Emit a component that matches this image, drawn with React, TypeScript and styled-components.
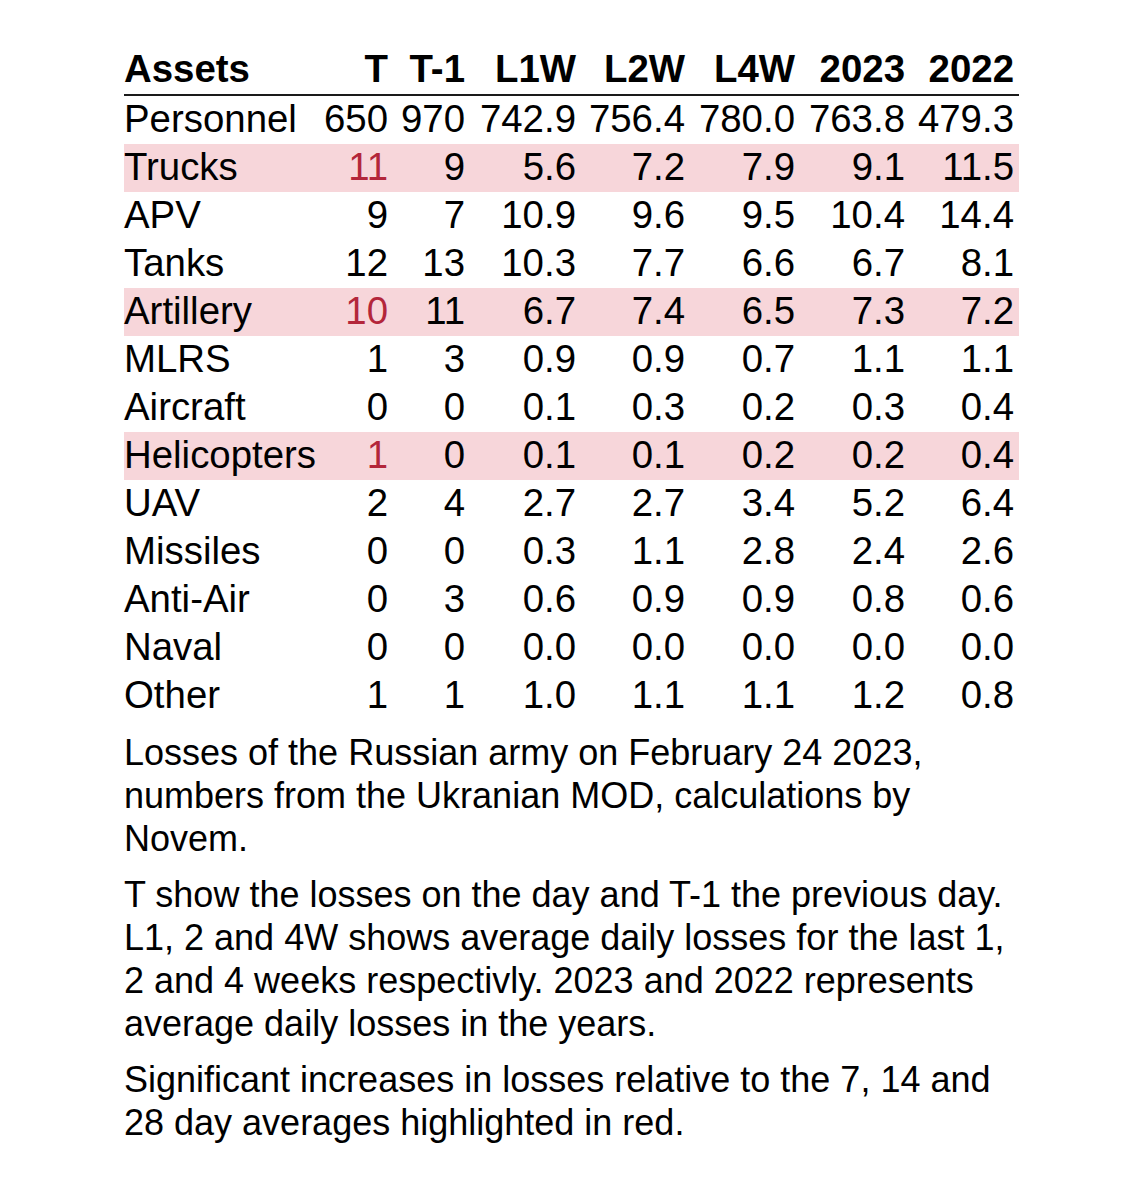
import React from "react";
import styled, { createGlobalStyle } from "styled-components";

const GlobalStyle = createGlobalStyle`
  html, body {
    margin: 0;
    padding: 0;
    background: #ffffff;
  }
  body {
    font-family: "Liberation Sans", Arial, sans-serif;
    color: #000;
  }
`;

const Page = styled.div`
  padding: 46px 0 0 124px;
  width: 895px;
`;

const Table = styled.div`
  display: grid;
  grid-template-columns: 194px 75px 77px 111px 109px 110px 110px 109px;
  font-size: 38.4px;
  line-height: 45px;
`;

const Row = styled.div<{ $head?: boolean; $hl?: boolean }>`
  display: contents;
  & > * {
    padding-bottom: 3px;
    background: ${(p) => (p.$hl ? "#f7d6da" : "transparent")};
    font-weight: ${(p) => (p.$head ? 700 : 400)};
    border-bottom: ${(p) => (p.$head ? "2px solid #1a1a1a" : "none")};
  }
`;

const NameCell = styled.div`
  text-align: left;
  white-space: nowrap;
`;

const NumCell = styled.div<{ $red?: boolean }>`
  text-align: right;
  padding-right: 5px;
  white-space: nowrap;
  color: ${(p) => (p.$red ? "#b3263a" : "#000")};
`;

const Caption = styled.div`
  margin-top: 11px;
  font-size: 36px;
  line-height: 43px;
`;

const Para = styled.p`
  margin: 0 0 13px 0;
`;

type Item = { name: string; vals: string[]; hl?: boolean };

const headers = ["T", "T-1", "L1W", "L2W", "L4W", "2023", "2022"];

const rows: Item[] = [
  { name: "Personnel", vals: ["650", "970", "742.9", "756.4", "780.0", "763.8", "479.3"] },
  { name: "Trucks", vals: ["11", "9", "5.6", "7.2", "7.9", "9.1", "11.5"], hl: true },
  { name: "APV", vals: ["9", "7", "10.9", "9.6", "9.5", "10.4", "14.4"] },
  { name: "Tanks", vals: ["12", "13", "10.3", "7.7", "6.6", "6.7", "8.1"] },
  { name: "Artillery", vals: ["10", "11", "6.7", "7.4", "6.5", "7.3", "7.2"], hl: true },
  { name: "MLRS", vals: ["1", "3", "0.9", "0.9", "0.7", "1.1", "1.1"] },
  { name: "Aircraft", vals: ["0", "0", "0.1", "0.3", "0.2", "0.3", "0.4"] },
  { name: "Helicopters", vals: ["1", "0", "0.1", "0.1", "0.2", "0.2", "0.4"], hl: true },
  { name: "UAV", vals: ["2", "4", "2.7", "2.7", "3.4", "5.2", "6.4"] },
  { name: "Missiles", vals: ["0", "0", "0.3", "1.1", "2.8", "2.4", "2.6"] },
  { name: "Anti-Air", vals: ["0", "3", "0.6", "0.9", "0.9", "0.8", "0.6"] },
  { name: "Naval", vals: ["0", "0", "0.0", "0.0", "0.0", "0.0", "0.0"] },
  { name: "Other", vals: ["1", "1", "1.0", "1.1", "1.1", "1.2", "0.8"] },
];

export default function App() {
  return (
    <>
      <GlobalStyle />
      <Page>
        <Table>
          <Row $head>
            <NameCell>Assets</NameCell>
            {headers.map((h) => (
              <NumCell key={h}>{h}</NumCell>
            ))}
          </Row>
          {rows.map((r) => (
            <Row key={r.name} $hl={r.hl}>
              <NameCell>{r.name}</NameCell>
              {r.vals.map((v, i) => (
                <NumCell key={i} $red={r.hl && i === 0}>
                  {v}
                </NumCell>
              ))}
            </Row>
          ))}
        </Table>
        <Caption>
          <Para>
            Losses of the Russian army on February 24 2023, numbers from the Ukranian MOD,
            calculations by Novem.
          </Para>
          <Para>
            T show the losses on the day and T-1 the previous day. L1, 2 and 4W shows average
            daily losses for the last 1, 2 and 4 weeks respectivly. 2023 and 2022 represents
            average daily losses in the years.
          </Para>
          <Para>
            Significant increases in losses relative to the 7, 14 and 28 day averages
            highlighted in red.
          </Para>
        </Caption>
      </Page>
    </>
  );
}
